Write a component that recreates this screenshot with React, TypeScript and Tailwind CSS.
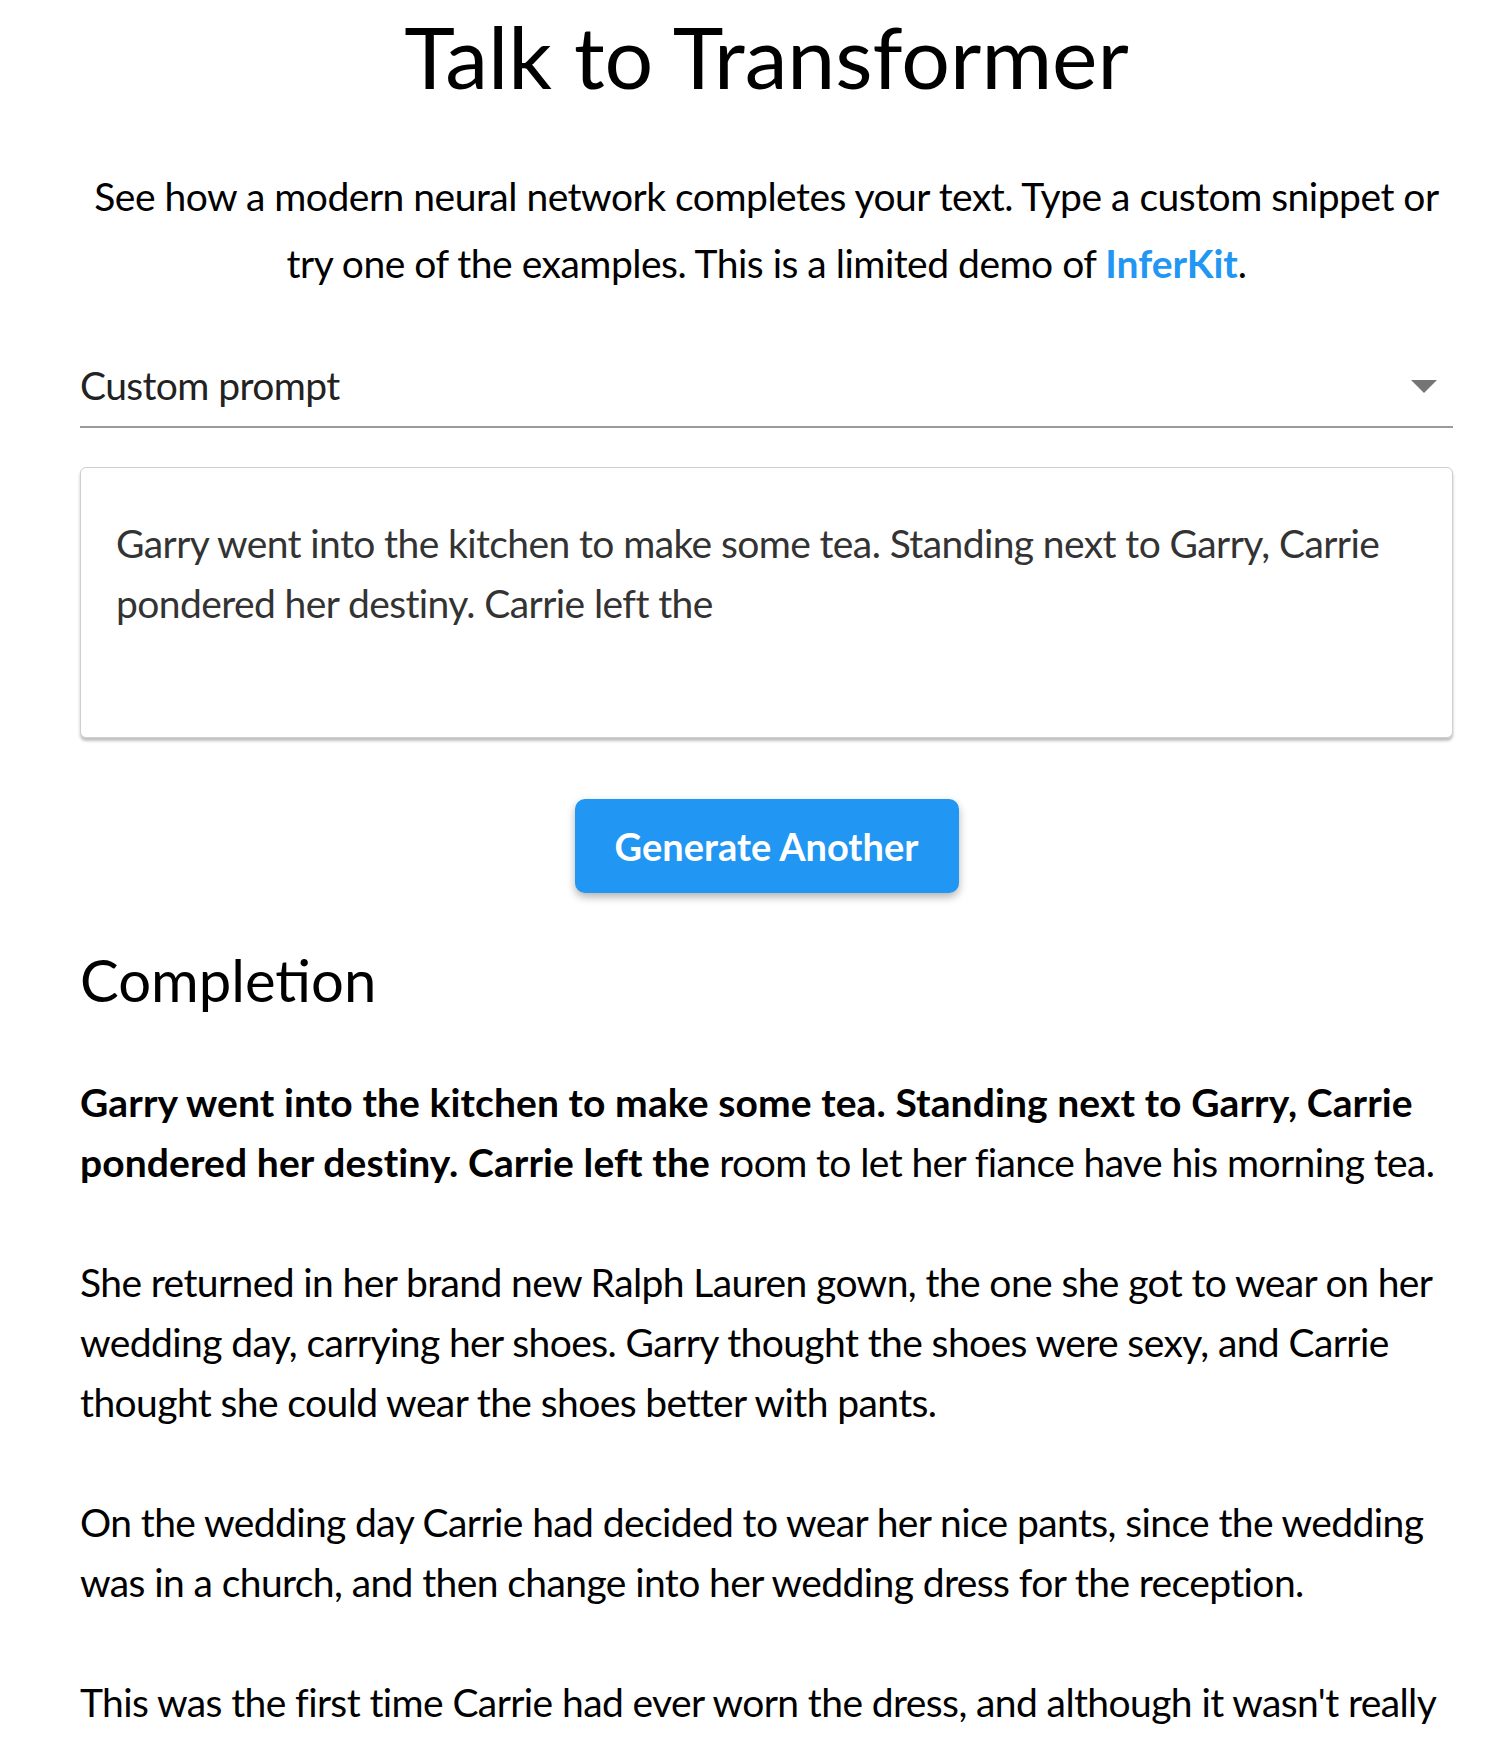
import React from "react";

const prompt =
  "Garry went into the kitchen to make some tea. Standing next to Garry, Carrie pondered her destiny. Carrie left the";

const paragraphs = [
  "She returned in her brand new Ralph Lauren gown, the one she got to wear on her wedding day, carrying her shoes. Garry thought the shoes were sexy, and Carrie thought she could wear the shoes better with pants.",
  "On the wedding day Carrie had decided to wear her nice pants, since the wedding was in a church, and then change into her wedding dress for the reception.",
  "This was the first time Carrie had ever worn the dress, and although it wasn't really",
];

// little grey triangle used by the select
function DropArrow() {
  return (
    <svg width="26" height="13" viewBox="0 0 26 13" className="shrink-0">
      <path d="M0 0 L26 0 L13 13 Z" fill="#757575" />
    </svg>
  );
}

export default function App() {
  return (
    <div className="min-h-screen bg-white font-['Lato',sans-serif] text-black">
      <div className="ml-[80px] w-[1373px] flex flex-col">
        {/* heading */}
        <h1 className="pt-[3px] text-center text-[86px] leading-[106px] font-normal">
          Talk to Transformer
        </h1>

        <p className="mt-[54px] text-center text-[39px] leading-[67px] tracking-[-0.5px]">
          See how a modern neural network completes your text. Type a custom snippet or try one of the
          examples. This is a limited demo of{" "}
          <a href="#" className="font-bold tracking-[0px] text-[#2196f3]">
            InferKit
          </a>
          .
        </p>

        {/* prompt select */}
        <div className="mt-[58px] flex items-center justify-between border-b-2 border-[#9a9a9a] pb-[11px]">
          <span className="text-[39px] leading-[60px] tracking-[-0.6px] text-[#222]">Custom prompt</span>
          <div className="mr-[16px] mt-[2px]">
            <DropArrow />
          </div>
        </div>

        {/* prompt text */}
        <div className="mt-[39px] h-[271px] rounded-[6px] border border-[#cfcfcf] bg-white px-[35px] pt-[45px] shadow-[0_3px_3px_rgba(0,0,0,0.25)]">
          <p className="text-[39px] leading-[60px] tracking-[-0.6px] text-[#333]">{prompt}</p>
        </div>

        <div className="mt-[61px] flex justify-center">
          <button className="h-[94px] w-[384px] rounded-[10px] bg-[#2196f3] text-[38px] font-bold text-white shadow-[0_4px_8px_rgba(0,0,0,0.3)]">
            Generate Another
          </button>
        </div>

        {/* completion output */}
        <h2 className="mt-[49px] text-[58px] leading-[76px] font-normal">Completion</h2>

        <div className="mt-[54px] -mr-[22px] flex flex-col gap-[60px] text-[39px] leading-[60px] tracking-[-0.6px]">
          <p>
            <b className="tracking-[0.1px]">{prompt}</b> room to let her fiance have his morning tea.
          </p>
          {paragraphs.map((t, i) => (
            <p key={i}>{t}</p>
          ))}
        </div>
      </div>
    </div>
  );
}
